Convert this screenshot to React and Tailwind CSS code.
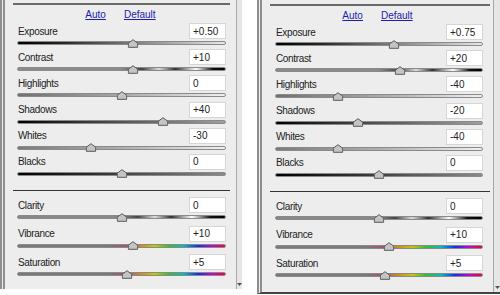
const font = { fontFamily: '"Liberation Sans", Arial, sans-serif' }

const grads = {
  exposure: 'bg-[linear-gradient(to_right,#000_0%,#222_20%,#888_60%,#e8e8e8_100%)]',
  contrast: 'bg-[linear-gradient(to_right,#8a8a8a_0%,#8a8a8a_50%,#444_60%,#ddd_68%,#333_76%,#fff_86%,#111_94%,#000_100%)]',
  highlights: 'bg-[linear-gradient(to_right,#707070_0%,#a8a8a8_50%,#f0f0f0_100%)]',
  shadows: 'bg-[linear-gradient(to_right,#000_0%,#444_40%,#a0a0a0_100%)]',
  whites: 'bg-[linear-gradient(to_right,#7a7a7a_0%,#b0b0b0_50%,#f0f0f0_100%)]',
  blacks: 'bg-[linear-gradient(to_right,#000_0%,#333_40%,#8a8a8a_100%)]',
  clarity: 'bg-[linear-gradient(to_right,#888_0%,#888_50%,#444_58%,#ddd_66%,#333_74%,#fff_84%,#111_93%,#000_100%)]',
  color: 'bg-[linear-gradient(to_right,#7a7a7a_0%,#7a7a7a_42%,#9a5a6a_52%,#d09020_60%,#c8c800_66%,#30c030_73%,#00c0c0_80%,#1030f0_87%,#d000d0_94%,#f00040_100%)]',
}

const left = {
  top: [
    ['Exposure', '+0.50', 'exposure', 133],
    ['Contrast', '+10', 'contrast', 133],
    ['Highlights', '0', 'highlights', 122],
    ['Shadows', '+40', 'shadows', 163],
    ['Whites', '-30', 'whites', 91],
    ['Blacks', '0', 'blacks', 122],
  ],
  bottom: [
    ['Clarity', '0', 'clarity', 122],
    ['Vibrance', '+10', 'color', 133],
    ['Saturation', '+5', 'color', 127],
  ],
  start: 17,
  end: 226,
}

const right = {
  top: [
    ['Exposure', '+0.75', 'exposure', 394],
    ['Contrast', '+20', 'contrast', 400],
    ['Highlights', '-40', 'highlights', 338],
    ['Shadows', '-20', 'shadows', 358],
    ['Whites', '-40', 'whites', 338],
    ['Blacks', '0', 'blacks', 379],
  ],
  bottom: [
    ['Clarity', '0', 'clarity', 379],
    ['Vibrance', '+10', 'color', 389],
    ['Saturation', '+5', 'color', 385],
  ],
  start: 275,
  end: 483,
}

function Thumb() {
  return (
    <svg width="11" height="9" viewBox="0 0 11 9">
      <path d="M5.5 0.7 L10.2 4.2 L10.2 8.3 L0.8 8.3 L0.8 4.2 Z" fill="#c4c4c4" stroke="#5a5a5a" strokeWidth="1" strokeLinejoin="round" />
    </svg>
  )
}

function Row({ label, value, grad, thumb, start, end, h }) {
  const pct = ((thumb - start) / (end - start)) * 100
  return (
    <div className={h}>
      <div className="flex items-center justify-between h-[16px]">
        <span className="text-[10px] tracking-[-0.35px] text-[#222] pl-[1px]">{label}</span>
        <div className="w-[37px] h-[16px] bg-white border border-[#d6d6d6] flex items-center pl-[3px] text-[10px] text-[#222]">
          {value}
        </div>
      </div>
      <div className={`relative mt-[2px] h-[4px] rounded-full border border-[#8a8a8a] ${grads[grad]}`}>
        <div className="absolute top-[-3.5px] -translate-x-1/2" style={{ left: `${pct}%` }}>
          <Thumb />
        </div>
      </div>
    </div>
  )
}

function Panel({ data, pt, lineMr, padL, bottomLine, height }) {
  return (
    <div className={`flex bg-[#ededed] border-l-[5px] border-double border-[#8e8e8e] ${height} ${bottomLine}`}>
      <div className={`w-[231px] ${pt}`}>
        <div className={`h-[2px] bg-[#6a6a6a] ml-[8px] ${lineMr}`} />
        <div className="flex justify-center gap-[18px] pt-[4px] h-[18px] text-[10px] leading-[12px] text-[#1c1ca8] underline">
          <span>Auto</span>
          <span>Default</span>
        </div>
        <div className={`${padL} pr-[10px]`}>
          {data.top.map(([l, v, g, t]) => (
            <Row key={l} label={l} value={v} grad={g} thumb={t} start={data.start} end={data.end} h="h-[26.2px]" />
          ))}
        </div>
        <div className={`mt-[10px] h-[1px] bg-[#333] ml-[8px] ${lineMr}`} />
        <div className={`mt-[6px] ${padL} pr-[10px]`}>
          {data.bottom.map(([l, v, g, t]) => (
            <Row key={l} label={l} value={v} grad={g} thumb={t} start={data.start} end={data.end} h="h-[28.5px]" />
          ))}
        </div>
      </div>
      <div className="flex-1 border-l border-[#a8a8a8] bg-[#e6e6e6] flex flex-col justify-end items-center pb-[3px]">
        <svg width="5" height="3" viewBox="0 0 5 3">
          <path d="M0 0 L5 0 L2.5 3 Z" fill="#555" />
        </svg>
      </div>
    </div>
  )
}

export default function App() {
  return (
    <div className="w-[500px] h-[295px] bg-white overflow-hidden flex gap-[15px]" style={font}>
      <div className="w-[242px]">
        <Panel data={left} pt="pt-[3px]" lineMr="mr-[6px]" padL="pl-[12px]" bottomLine="" height="h-[289px]" />
      </div>
      <div className="w-[243px]">
        <Panel data={right} pt="pt-[4px]" lineMr="mr-[3px]" padL="pl-[13px]" bottomLine="border-b-2 border-b-[#444] border-b-solid" height="h-[294px]" />
      </div>
    </div>
  )
}
